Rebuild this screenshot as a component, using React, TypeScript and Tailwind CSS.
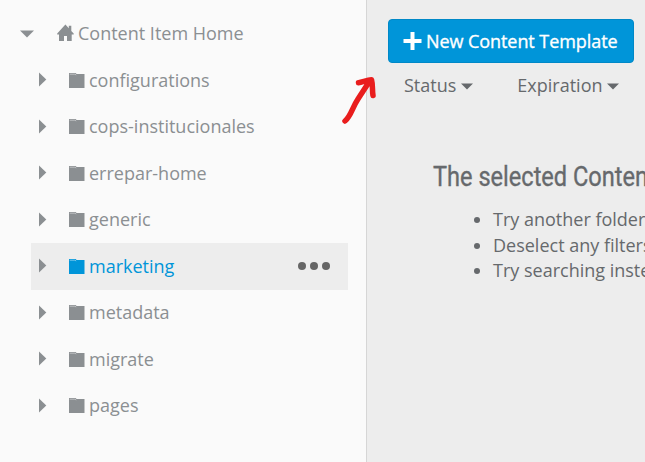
const folders = [
  'configurations',
  'cops-institucionales',
  'errepar-home',
  'generic',
  'marketing',
  'metadata',
  'migrate',
  'pages',
];

const hints = [
  'Try another folder',
  'Deselect any filters',
  'Try searching instead',
];

function FolderIcon() {
  return (
    <svg width="16" height="16" viewBox="0 0 16 16" fill="currentColor" className="shrink-0">
      <path d="M0 1h6.5l1.2 1h7.800V16H0z" />
      <path d="M.7 2.200h5.200l1.300 .8" fill="none" stroke="#fff" strokeOpacity=".65" strokeWidth=".7" />
    </svg>
  );
}

function HomeIcon() {
  return (
    <svg width="17" height="18" viewBox="0 0 17 18" fill="currentColor" className="shrink-0">
      <path d="M8.4 .5 11.8 4.2V1.8h2.5v5.1l2.4 2.6v1h-2V17H10v-5H7v5H2v-6.5H.2v-1z" />
    </svg>
  );
}

function Caret() {
  return (
    <svg width="12" height="7" viewBox="0 0 12 7" fill="currentColor" className="mt-[3px] shrink-0">
      <path d="M0 .5h12L6 6.5z" />
    </svg>
  );
}

function FolderRow({ name, selected }: { name: string; selected: boolean }) {
  return (
    <li className={`flex h-[46.52px] items-center pb-px pl-[8px] pr-[18px] ${selected ? 'bg-[#ededed]' : ''}`}>
      <svg width="8" height="15" viewBox="0 0 8 15" fill="#8b8f92" className="shrink-0">
        <path d="M0 .5 7.3 7.5 0 14.5z" />
      </svg>
      <span className={`ml-[22px] flex items-center gap-[4px] ${selected ? 'text-[#0095d9]' : 'text-[#8b8f92]'}`}>
        <FolderIcon />
        <span>{name}</span>
      </span>
      {selected && (
        <span className="ml-auto flex gap-[4px]">
          <i className="size-2 rounded-full bg-[#666]" />
          <i className="size-2 rounded-full bg-[#666]" />
          <i className="size-2 rounded-full bg-[#666]" />
        </span>
      )}
    </li>
  );
}

export default function App() {
  return (
    <div className="relative flex h-[462px] w-[645px] overflow-hidden bg-[#ededed] font-['Open_Sans',sans-serif] text-[18px] leading-[26px]">
      <aside className="w-[367px] shrink-0 border-r border-[#d6d6d6] bg-[#fafafa] pt-[10px] pr-[18px]">
        <div className="flex h-[47px] items-center pl-[20px] text-[#8b8f92]">
          <svg width="14" height="8" viewBox="0 0 14 8" fill="currentColor" className="shrink-0">
            <path d="M0 .5h14L7 7.5z" />
          </svg>
          <span className="ml-[23px] flex items-center gap-[4px] pb-px">
            <HomeIcon />
            <span>Content Item Home</span>
          </span>
        </div>
        <ul className="pl-[31px]">
          {folders.map((name) => (
            <FolderRow key={name} name={name} selected={name === 'marketing'} />
          ))}
        </ul>
      </aside>

      <main className="min-w-0 flex-1 pl-[21px] pt-[19px] text-[#66696c]">
        <button className="flex h-[44px] w-[246px] items-center rounded-[4px] border border-[#0088c7] bg-[#0095d9] pl-[14px] whitespace-nowrap text-white">
          <svg width="19" height="18" viewBox="0 0 19 18" fill="currentColor" className="mr-[4px] shrink-0">
            <path d="M7.5 0h4v7H18.500v4h-7v7h-4v-7H.5V7h7z" />
          </svg>
          <span className="tracking-[-0.07px] [-webkit-text-stroke:0.35px_white]">New Content Template</span>
        </button>
        <div className="mt-[9px] flex gap-[44px] pl-[16px]">
          <span className="flex items-center gap-[5px]">Status <Caret /></span>
          <span className="flex items-center gap-[4px]">Expiration <Caret /></span>
        </div>
        <h2 className="mt-[62px] ml-[45px] h-[34px] origin-left scale-x-[0.873] font-['Roboto',sans-serif] text-[27px] leading-[34px] whitespace-nowrap [-webkit-text-stroke:0.35px_#66696c]">
          The selected Content
        </h2>
        <ul className="mt-[13px] ml-[105px] list-disc leading-[25.7px] whitespace-nowrap">
          {hints.map((hint) => (
            <li key={hint}>{hint}</li>
          ))}
        </ul>
      </main>

      <svg
        width="40"
        height="54"
        viewBox="0 0 40 54"
        className="absolute left-[340px] top-[73px]"
        fill="none"
        stroke="#e91d1d"
        strokeWidth="5.5"
        strokeLinecap="round"
        strokeLinejoin="round"
      >
        <path d="M5 48C11 43 12 35 18 26L30 7.500M18.500 9.800C22 9.500 27 7 31.500 6.800C33 12 32 17 33 22.500" />
      </svg>
    </div>
  );
}
